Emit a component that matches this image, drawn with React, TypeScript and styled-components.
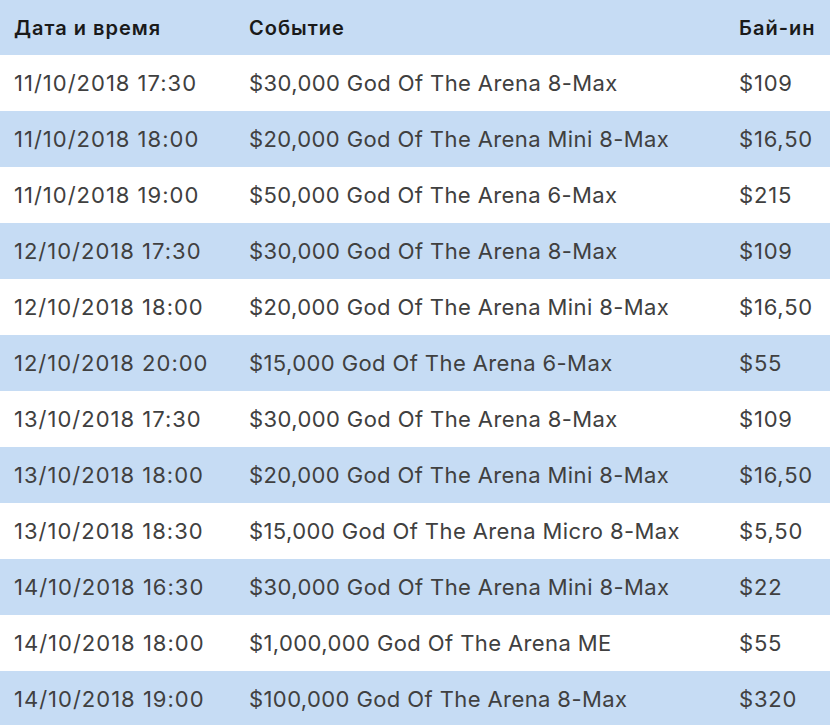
import styled, { createGlobalStyle } from 'styled-components'

const GlobalStyle = createGlobalStyle`
    html, body {
        margin: 0;
        padding: 0;
        background: #fff;
    }
    body {
        font-family: Inter, "Liberation Sans", sans-serif;
    }
`

const Table = styled.table`
    width: 830px;
    border-collapse: collapse;
    table-layout: fixed;
`
const HeadRow = styled.tr`
    height: 55px;
    background-color: #c6dcf4;
`
const HeadCell = styled.th<{ $width: number }>`
    box-sizing: border-box;
    width: ${(p) => p.$width}px;
    padding: 0 0 0 14px;
    text-align: left;
    font-size: 20px;
    font-weight: 600;
    letter-spacing: 1px;
    color: #1a1a1a;
`
const Row = styled.tr<{ $striped: boolean }>`
    height: 56px;
    background-color: ${(p) => (p.$striped ? '#c6dcf4' : '#fff')};
`
const Cell = styled.td<{ $spacing?: number }>`
    padding: 0 0 0 14px;
    font-size: 22px;
    font-weight: 400;
    letter-spacing: ${(p) => p.$spacing ?? 0.4}px;
    color: #404040;
    white-space: nowrap;
`

const rows: [string, string, string][] = [
    ['11/10/2018 17:30', '$30,000 God Of The Arena 8-Max', '$109'],
    ['11/10/2018 18:00', '$20,000 God Of The Arena Mini 8-Max', '$16,50'],
    ['11/10/2018 19:00', '$50,000 God Of The Arena 6-Max', '$215'],
    ['12/10/2018 17:30', '$30,000 God Of The Arena 8-Max', '$109'],
    ['12/10/2018 18:00', '$20,000 God Of The Arena Mini 8-Max', '$16,50'],
    ['12/10/2018 20:00', '$15,000 God Of The Arena 6-Max', '$55'],
    ['13/10/2018 17:30', '$30,000 God Of The Arena 8-Max', '$109'],
    ['13/10/2018 18:00', '$20,000 God Of The Arena Mini 8-Max', '$16,50'],
    ['13/10/2018 18:30', '$15,000 God Of The Arena Micro 8-Max', '$5,50'],
    ['14/10/2018 16:30', '$30,000 God Of The Arena Mini 8-Max', '$22'],
    ['14/10/2018 18:00', '$1,000,000 God Of The Arena ME', '$55'],
    ['14/10/2018 19:00', '$100,000 God Of The Arena 8-Max', '$320'],
]

export default function App() {
    return (
        <>
            <GlobalStyle />
            <Table>
                <thead>
                    <HeadRow>
                        <HeadCell $width={235}>Дата и время</HeadCell>
                        <HeadCell $width={490}>Событие</HeadCell>
                        <HeadCell $width={105}>Бай-ин</HeadCell>
                    </HeadRow>
                </thead>
                <tbody>
                    {rows.map(([date, event, buyin], i) => (
                        <Row key={i} $striped={i % 2 === 1}>
                            <Cell $spacing={1}>{date}</Cell>
                            <Cell>{event}</Cell>
                            <Cell $spacing={0.8}>{buyin}</Cell>
                        </Row>
                    ))}
                </tbody>
            </Table>
        </>
    )
}
